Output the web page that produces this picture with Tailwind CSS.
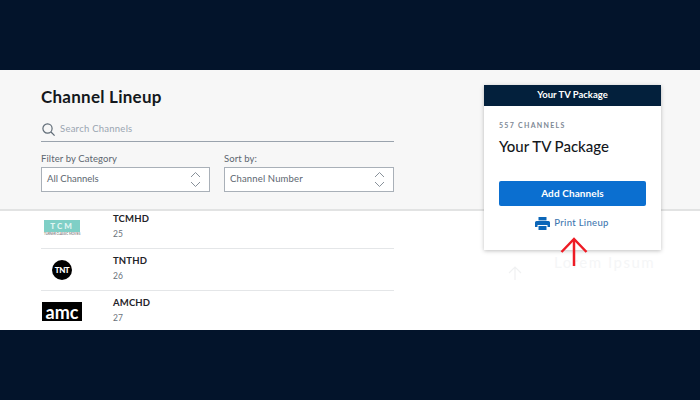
<!doctype html>
<html lang="en">
  <head>
    <meta charset="UTF-8" />
    <title>Channel Lineup</title>
    <script src="https://cdn.jsdelivr.net/npm/@tailwindcss/browser@4"></script>
  </head>
  <body class="m-0 h-[400px] w-[700px] overflow-hidden bg-[#03142b] font-['Lato',sans-serif]">
    <div class="h-[70px]"></div>
    <main class="relative h-[260px] w-full overflow-hidden bg-white">
      <!-- filters -->
      <section class="h-[141px] border-b-2 border-[#e2e3e3] bg-[#f7f7f7] pl-[41px] pt-[16px]">
        <h1 class="text-[17px] leading-[22px] font-bold tracking-[0.25px] text-[#14181d]">Channel Lineup</h1>
        <div class="mt-[10px] flex h-[24px] w-[353px] items-center gap-[5px] border-b border-[#9aa3ad] pl-[1px]">
          <svg class="h-[13px] w-[13px]" viewBox="0 0 13 13" fill="none" stroke="#5f6b76" stroke-width="1.2"><circle cx="5.5" cy="5.5" r="4.6" /><path d="M9 9l3.6 3.6" /></svg>
          <span class="text-[9.5px] tracking-[0.25px] text-[#9aa5b1]">Search Channels</span>
        </div>
        <div class="mt-[11px] flex gap-[14px]">
          <div>
            <label class="block text-[9.5px] leading-[12px] tracking-[0.1px] text-[#5c6670]">Filter by Category</label>
            <div class="mt-[2px] flex h-[25px] w-[169px] items-center justify-between border border-[#a9b0b8] bg-white pl-[5px] pr-[8px] text-[9.5px] text-[#5c6670]">
              All Channels
              <svg class="h-[17px] w-[11px]" viewBox="0 0 11 17" fill="none" stroke="#7a848e" stroke-width="0.9"><path d="M1 6l4.5-4.5L10 6" /><path d="M1 11l4.5 4.5L10 11" /></svg>
            </div>
          </div>
          <div>
            <label class="block text-[9.5px] leading-[12px] tracking-[0.1px] text-[#5c6670]">Sort by:</label>
            <div class="mt-[2px] flex h-[25px] w-[170px] items-center justify-between border border-[#a9b0b8] bg-white pl-[5px] pr-[8px] text-[9.5px] tracking-[0.15px] text-[#5c6670]">
              Channel Number
              <svg class="h-[17px] w-[11px]" viewBox="0 0 11 17" fill="none" stroke="#7a848e" stroke-width="0.9"><path d="M1 6l4.5-4.5L10 6" /><path d="M1 11l4.5 4.5L10 11" /></svg>
            </div>
          </div>
        </div>
      </section>

      <!-- channel rows -->
      <ul class="ml-[41px] w-[353px]">
        <li class="flex h-[38px] border-b border-[#e4e6e8]">
          <div class="flex w-[72px] flex-col pl-[3px] pt-[9px]">
            <div class="flex h-[12px] w-[36px] items-center justify-center bg-[#7fcfc6] text-[8px] leading-none font-black tracking-[2px] text-[#e3f5f2]">TCM</div>
            <div class="mt-[1px] w-[36px] text-center text-[3px] leading-[3px] whitespace-nowrap text-[#555]">TURNER CLASSIC MOVIES</div>
          </div>
          <div class="pt-[2px]">
            <p class="text-[9.5px] leading-[12px] font-bold tracking-[0.15px] text-[#1f2429]">TCMHD</p>
            <p class="mt-[4px] text-[8.5px] leading-[11px] text-[#6a727a]">25</p>
          </div>
        </li>
        <li class="flex h-[42px] border-b border-[#e4e6e8]">
          <div class="w-[72px] pl-[11px] pt-[11px]">
            <div class="flex h-[20px] w-[20px] items-center justify-center rounded-full bg-black text-[8px] leading-none font-black tracking-[-0.5px] text-white">TNT</div>
          </div>
          <div class="pt-[6px]">
            <p class="text-[9.5px] leading-[12px] font-bold tracking-[0.15px] text-[#1f2429]">TNTHD</p>
            <p class="mt-[4px] text-[8.5px] leading-[11px] text-[#6a727a]">26</p>
          </div>
        </li>
        <li class="flex h-[40px]">
          <div class="w-[72px] pl-[1px] pt-[11px]">
            <div class="flex h-[19px] w-[40px] items-center justify-center bg-black text-[18px] leading-none font-bold text-white">amc</div>
          </div>
          <div class="pt-[6px]">
            <p class="text-[9.5px] leading-[12px] font-bold tracking-[0.15px] text-[#1f2429]">AMCHD</p>
            <p class="mt-[4px] text-[8.5px] leading-[11px] text-[#6a727a]">27</p>
          </div>
        </li>
      </ul>

      <!-- faint text behind the card -->
      <div class="absolute left-[554px] top-[181px] text-[15px] tracking-[1.5px] text-[#f5f6f7]">Lorem Ipsum</div>
      <svg class="absolute left-[507px] top-[196px] h-[14px] w-[16px]" viewBox="0 0 16 14" fill="none" stroke="#f0f1f2" stroke-width="1.2"><path d="M2 7l6-6 6 6M8 1v13" /></svg>

      <!-- package card -->
      <aside class="absolute left-[484px] top-[15px] h-[165px] w-[177px] bg-white shadow-[0_1px_4px_rgba(0,0,0,0.25)]">
        <div class="flex h-[21px] items-center justify-center bg-[#03203c] text-[9.5px] font-bold text-white">Your TV Package</div>
        <div class="px-[15px] pt-[15px]">
          <p class="text-[7px] leading-[9px] font-bold tracking-[1.3px] text-[#7d8894]">557 CHANNELS</p>
          <h2 class="mt-[6px] text-[15px] leading-[20px] font-medium text-[#14181d]">Your TV Package</h2>
          <button class="mt-[25px] flex h-[25px] w-[147px] items-center justify-center rounded-[2px] bg-[#0b6fd0] text-[10px] font-bold tracking-[0.1px] text-white">Add Channels</button>
          <div class="mt-[10px] flex items-center justify-center gap-[4px] pr-[1px] text-[9.5px] font-medium tracking-[0.3px] text-[#3f78b0]">
            <svg class="h-[13px] w-[15px]" viewBox="0 0 15 13" fill="#0b66b8"><path d="M3.5 0h8v3.4h-8z" /><path d="M1.5 4h12A1.5 1.5 0 0 1 15 5.500V10h-2.500V8h-10v2H0V5.500A1.500 1.500 0 0 1 1.500 4z" /><path d="M3.500 9h8v4h-8z" /></svg>
            Print Lineup
          </div>
        </div>
      </aside>

      <!-- red annotation arrow -->
      <svg class="absolute left-[560px] top-[167px] h-[30px] w-[28px]" viewBox="0 0 28 30" fill="none" stroke="#ee1c25" stroke-width="2.5"><path d="M14 2v27" /><path d="M1.500 15L14 2l12.500 13" /></svg>
    </main>
  </body>
</html>
